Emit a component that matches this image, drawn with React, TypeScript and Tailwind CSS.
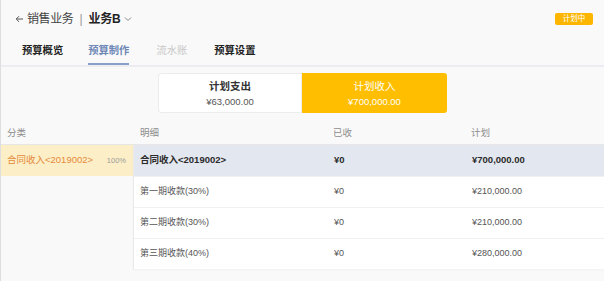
import React from "react";

const font = { fontFamily: '"Liberation Sans","Noto Sans CJK SC",sans-serif' };

function Row({ name, got, plan, first }: { name: string; got: string; plan: string; first?: boolean }) {
  return (
    <div
      className={
        "flex items-center h-[31px] pl-[6px] " +
        (first
          ? "bg-[#e3e7ef] text-[#2b2b2b] font-bold text-[9.5px]"
          : "bg-white text-[#555] text-[9px] border-t border-[#f0f0f0]")
      }
    >
      <div className="w-[194px]">{name}</div>
      <div className="w-[138px]">{got}</div>
      <div>{plan}</div>
    </div>
  );
}

export default function App() {
  return (
    <div style={font} className="w-[604px] h-[281px] bg-[#f9f9f9] border-l border-[#dedede] overflow-hidden flex flex-col">
      {/* header */}
      <div className="h-[65px] flex flex-col">
        <div className="flex items-center h-[24px] mt-[7px] pl-[14px] pr-[11px]">
          <svg width="9" height="8" viewBox="0 0 9 8" className="mr-[3px]">
            <path d="M8 4H1.5M4 1.2 1.2 4 4 6.8" fill="none" stroke="#555" strokeWidth="1" />
          </svg>
          <span className="text-[12px] text-[#444] tracking-[-0.4px]">销售业务</span>
          <span className="text-[12px] text-[#999] mx-[6px]">|</span>
          <span className="text-[12px] text-[#222] font-bold tracking-[-0.3px]">业务B</span>
          <svg width="8" height="6" viewBox="0 0 8 6" className="ml-[4px]">
            <path d="M1 1.5 4 4.5 7 1.5" fill="none" stroke="#888" strokeWidth="1" />
          </svg>
          <div className="ml-auto -mt-[1px] h-[12px] w-[38px] rounded-[2px] bg-[#fdb600] text-white text-[7.5px] flex items-center justify-center">
            计划中
          </div>
        </div>
        <div className="flex items-end h-[34px] pl-[21px] text-[10.3px] font-bold">
          <div className="text-[#222] h-[22px] mr-[25px]">预算概览</div>
          <div className="text-[#6f88b6] h-[22px] mr-[27px] border-b-[2px] border-[#86a0c9]">预算制作</div>
          <div className="text-[#c8c8c8] font-normal h-[22px] mr-[27px]">流水账</div>
          <div className="text-[#222] h-[22px]">预算设置</div>
        </div>
      </div>
      <div className="h-[2px] bg-[#ececf2]" />

      {/* toggle */}
      <div className="flex justify-center mt-[6px]">
        <div className="w-[144px] h-[40px] bg-white border border-[#ececec] rounded-l-[3px] flex flex-col items-center justify-center">
          <div className="text-[10.5px] font-bold text-[#333] leading-[14px]">计划支出</div>
          <div className="text-[9.5px] text-[#555] leading-[12px] mt-[3px]">¥63,000.00</div>
        </div>
        <div className="w-[145px] h-[40px] bg-[#ffbe00] rounded-r-[3px] flex flex-col items-center justify-center">
          <div className="text-[10.5px] text-white leading-[14px]">计划收入</div>
          <div className="text-[9.5px] text-white leading-[12px] mt-[3px]">¥700,000.00</div>
        </div>
      </div>

      {/* table header */}
      <div className="flex items-center h-[24px] mt-[8px] pt-[2px] border-b border-[#e6e6e6] text-[9.5px] text-[#8c8c8c]">
        <div className="w-[132px] pl-[6px]">分类</div>
        <div className="w-[200px] pl-[7px]">明细</div>
        <div className="w-[138px]">已收</div>
        <div>计划</div>
      </div>

      {/* body */}
      <div className="flex">
        <div className="w-[132px] flex flex-col">
          <div className="h-[31px] bg-[#fcefc8] flex items-center pl-[6px] pr-[7px]">
            <span className="text-[9.5px] text-[#e58a3a]">合同收入&lt;2019002&gt;</span>
            <span className="ml-auto text-[7.5px] text-[#999]">100%</span>
          </div>
        </div>
        <div className="flex-1 flex flex-col border-l border-[#eaeaea] shadow-[0_1px_2px_rgba(0,0,0,0.04)]">
          <Row first name="合同收入<2019002>" got="¥0" plan="¥700,000.00" />
          <Row name="第一期收款(30%)" got="¥0" plan="¥210,000.00" />
          <Row name="第二期收款(30%)" got="¥0" plan="¥210,000.00" />
          <Row name="第三期收款(40%)" got="¥0" plan="¥280,000.00" />
        </div>
      </div>
    </div>
  );
}
